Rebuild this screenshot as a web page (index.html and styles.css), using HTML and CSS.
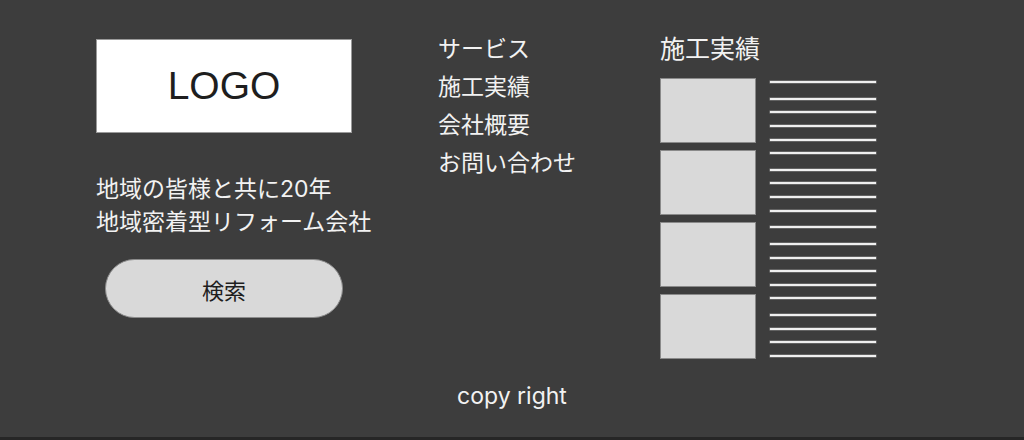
FILE: index.html
```html
<!DOCTYPE html>
<html lang="ja">
<head>
<meta charset="utf-8">
<title>Footer</title>
<link rel="stylesheet" href="styles.css">
</head>
<body>
<footer class="footer">
  <div class="footer-main">
    <div class="brand">
      <div class="logo">LOGO</div>
      <p class="tagline">地域の皆様と共に20年<br>地域密着型リフォーム会社</p>
      <button class="search-btn" type="button">検索</button>
    </div>
    <nav class="nav">
      <a class="nav-link" href="#">サービス</a>
      <a class="nav-link" href="#">施工実績</a>
      <a class="nav-link" href="#">会社概要</a>
      <a class="nav-link" href="#">お問い合わせ</a>
    </nav>
    <section class="works">
      <h2 class="works-title">施工実績</h2>
      <div class="works-body">
        <div class="thumbs">
          <div class="thumb"></div>
          <div class="thumb"></div>
          <div class="thumb"></div>
          <div class="thumb"></div>
        </div>
        <div class="lines">
          <span class="line"></span><span class="line spaced"></span><span class="line"></span><span class="line"></span><span class="line"></span>
          <span class="line"></span><span class="line spaced"></span><span class="line"></span><span class="line"></span><span class="line"></span>
          <span class="line spaced"></span><span class="line spaced"></span><span class="line"></span><span class="line"></span><span class="line"></span>
          <span class="line"></span><span class="line spaced"></span><span class="line"></span><span class="line"></span><span class="line"></span>
        </div>
      </div>
    </section>
  </div>
  <p class="copyright">copy right</p>
</footer>
</body>
</html>
```
FILE: styles.css
```css
html {
  background: #262626;
}
body {
  margin: 0;
  font-family: Inter, "Noto Sans CJK JP", sans-serif;
  color: #f2f2f2;
}
.footer {
  height: 437px;
  background: #3d3d3d;
  box-sizing: border-box;
  padding-top: 30px;
}
.footer-main {
  display: flex;
  padding-left: 96px;
}
.brand {
  width: 256px;
  display: flex;
  flex-direction: column;
  align-items: center;
}
.logo {
  margin-top: 9px;
  width: 256px;
  height: 94px;
  box-sizing: border-box;
  background: #ffffff;
  border: 1px solid #9a9a9a;
  color: #1e1e1e;
  font-family: "Liberation Sans", Arial, sans-serif;
  font-size: 39px;
  display: flex;
  align-items: center;
  justify-content: center;
}
.tagline {
  align-self: stretch;
  margin: 40px 0 0;
  font-size: 23px;
  line-height: 33px;
  white-space: nowrap;
}
.search-btn {
  margin-top: 20px;
  width: 238px;
  height: 59px;
  border-radius: 30px;
  background: #d9d9d9;
  border: 1px solid #8c8c8c;
  color: #1e1e1e;
  font-family: Inter, "Noto Sans CJK JP", sans-serif;
  font-size: 22px;
  padding: 0;
}
.nav {
  margin-left: 86px;
  width: 136px;
  display: flex;
  flex-direction: column;
}
.nav-link {
  color: #f2f2f2;
  text-decoration: none;
  font-size: 23px;
  line-height: 38px;
  white-space: nowrap;
}
.works {
  margin-left: 86px;
}
.works-title {
  margin: 4px 0 0;
  font-size: 25px;
  line-height: 30px;
  font-weight: 400;
}
.works-body {
  margin-top: 14px;
  display: flex;
  gap: 14px;
}
.thumbs {
  display: flex;
  flex-direction: column;
  gap: 7px;
}
.thumb {
  width: 96px;
  height: 65px;
  box-sizing: border-box;
  background: #d9d9d9;
  border: 1px solid #8a8a8a;
}
.lines {
  width: 106px;
  display: flex;
  flex-direction: column;
  justify-content: space-between;
  padding: 3px 0 2px;
}
.line {
  display: block;
  height: 2px;
  background: #f0f0f0;
  box-shadow: 0 0 0 0.5px #8a8a8a;
}
.line.spaced {
  margin-top: 3px;
}
.copyright {
  margin: 22px 0 0;
  text-align: center;
  font-size: 23px;
  line-height: 30px;
}
```
